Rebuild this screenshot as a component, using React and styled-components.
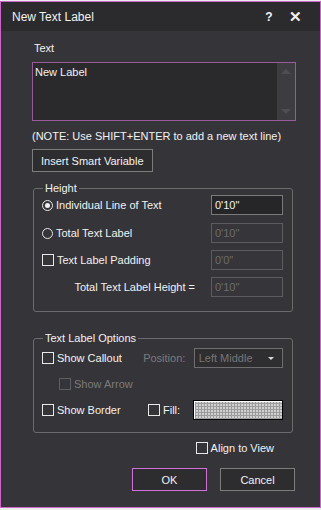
import styled, { createGlobalStyle } from 'styled-components'

const Global = createGlobalStyle`
  html, body {
    margin: 0;
    padding: 0;
    background: #ececec;
  }
  body {
    font-family: "Liberation Sans", Arial, sans-serif;
    font-size: 11px;
  }
`

const Window = styled.div`
  margin-top: 1px;
  width: 321px;
  height: 507px;
  box-sizing: border-box;
  border: 1px solid #cc66cc;
  background: #353439;
  color: #f2f2f2;
  display: flex;
  flex-direction: column;
`

const TitleBar = styled.div`
  height: 29px;
  flex: none;
  background: #2b2b2e;
  display: flex;
  align-items: center;
  padding: 0 12px 0 11px;
  font-size: 12px;
`

const Title = styled.span`
  flex: 1;
`

const TitleButton = styled.span`
  width: 26px;
  text-align: center;
  font-weight: bold;
  font-size: ${p => p.$size || 12}px;
`

const Body = styled.div`
  padding: 9px 24px 0 31px;
  display: flex;
  flex-direction: column;
`

const Label = styled.div`
  padding-left: 2px;
  line-height: 16px;
`

const TextArea = styled.div`
  margin-top: 6px;
  height: 59px;
  box-sizing: border-box;
  border: 1px solid #9a5a9a;
  background: #2a2a2c;
  display: flex;
`

const TextAreaText = styled.div`
  flex: 1;
  padding: 2px 2px;
  line-height: 14px;
`

const ScrollBar = styled.div`
  width: 18px;
  background: #3d3c41;
  display: flex;
  flex-direction: column;
  justify-content: space-between;
  align-items: center;
  padding: 6px 0;
`

const Arrow = styled.div`
  width: 0;
  height: 0;
  border-left: 5px solid transparent;
  border-right: 5px solid transparent;
  ${p => p.$down ? 'border-top: 5px solid #4f4e53;' : 'border-bottom: 5px solid #4f4e53;'}
`

const Note = styled.div`
  margin-top: 8px;
  line-height: 14px;
`

const Button = styled.button`
  font-family: inherit;
  font-size: 11px;
  color: #f2f2f2;
  background: #2d2d30;
  border: 1px solid ${p => p.$primary ? '#d070d8' : '#7c7c7c'};
  height: 23px;
  padding: 0 ${p => p.$pad || 8}px;
  width: ${p => p.$width ? p.$width + 'px' : 'auto'};
  align-self: flex-start;
`

const Group = styled.fieldset`
  margin: ${p => p.$top}px 3px 0 1px;
  border: 1px solid #6b6b6b;
  border-radius: 3px;
  padding: 0 8px ${p => p.$bottom}px 8px;
  min-width: 0;
`

const Legend = styled.legend`
  padding: 0 2px;
  margin-left: 1px;
  line-height: 14px;
`

const Row = styled.div`
  display: flex;
  align-items: center;
  height: 20px;
  margin-top: ${p => p.$gap}px;
`

const Option = styled.label`
  display: flex;
  align-items: center;
  gap: 3px;
  width: ${p => p.$width ? p.$width + 'px' : 'auto'};
  color: ${p => p.$disabled ? '#7b7b7b' : '#f2f2f2'};
  padding-left: ${p => p.$indent || 0}px;
`

const Radio = styled.span`
  width: 11px;
  height: 11px;
  box-sizing: border-box;
  border: 1px solid #e8e8e8;
  border-radius: 50%;
  display: flex;
  align-items: center;
  justify-content: center;
  &::after {
    content: '';
    width: 5px;
    height: 5px;
    border-radius: 50%;
    background: ${p => p.$checked ? '#f2f2f2' : 'transparent'};
  }
`

const Check = styled.span`
  width: 12px;
  height: 12px;
  box-sizing: border-box;
  border: 1px solid ${p => p.$disabled ? '#5e5e5e' : '#e8e8e8'};
  flex: none;
`

const Spacer = styled.div`
  flex: 1;
`

const RightLabel = styled.span`
  padding-right: 16px;
`

const Field = styled.div`
  width: 72px;
  height: 20px;
  box-sizing: border-box;
  border: 1px solid ${p => p.$disabled ? '#5c5c5c' : '#7a7a7a'};
  background: ${p => p.$disabled ? '#36353a' : '#262628'};
  color: ${p => p.$disabled ? '#6c6c6c' : '#f2f2f2'};
  padding: 0 3px;
  line-height: 18px;
  margin-right: 1px;
`

const Muted = styled.span`
  color: #7b7b7b;
  width: 51px;
`

const Select = styled.div`
  width: 90px;
  height: 20px;
  box-sizing: border-box;
  border: 1px solid #6e6e6e;
  background: #2e2e31;
  color: #767676;
  display: flex;
  align-items: center;
  padding: 0 4px;
  margin-right: 1px;
`

const Caret = styled.span`
  margin-left: auto;
  width: 0;
  height: 0;
  border-left: 3px solid transparent;
  border-right: 3px solid transparent;
  border-top: 3px solid #d8d8d8;
  margin-right: 4px;
`

const Swatch = styled.div`
  width: 90px;
  height: 20px;
  box-sizing: border-box;
  border: 1px solid #000;
  margin-right: 1px;
  padding: 1px 0 0 1px;
  background: #fff;
`

const SwatchFill = styled.div`
  height: 100%;
  background-color: #d0d0d0;
  background-image:
    repeating-linear-gradient(90deg, #9c9c9c 0 1px, transparent 1px 3px),
    repeating-linear-gradient(0deg, #9c9c9c 0 1px, transparent 1px 3px);
`

const AlignRow = styled.div`
  display: flex;
  justify-content: flex-end;
  padding-right: 22px;
  margin-top: 8px;
  height: 14px;
  align-items: center;
`

const Footer = styled.div`
  display: flex;
  justify-content: flex-end;
  gap: 13px;
  margin-top: 13px;
  margin-right: 1px;
`

export default function App() {
  return (
    <>
      <Global />
      <Window>
        <TitleBar>
          <Title>New Text Label</Title>
          <TitleButton>?</TitleButton>
          <TitleButton $size={15}>✕</TitleButton>
        </TitleBar>
        <Body>
          <Label>Text</Label>
          <TextArea>
            <TextAreaText>New Label</TextAreaText>
            <ScrollBar>
              <Arrow />
              <Arrow $down />
            </ScrollBar>
          </TextArea>
          <Note>(NOTE: Use SHIFT+ENTER to add a new text line)</Note>
          <Button $pad={8} style={{ marginTop: 6 }}>Insert Smart Variable</Button>

          <Group $top={9} $bottom={14}>
            <Legend>Height</Legend>
            <Row $gap={0}>
              <Option><Radio $checked />Individual Line of Text</Option>
              <Spacer />
              <Field>0'10"</Field>
            </Row>
            <Row $gap={8}>
              <Option><Radio />Total Text Label</Option>
              <Spacer />
              <Field $disabled>0'10"</Field>
            </Row>
            <Row $gap={7}>
              <Option><Check />Text Label Padding</Option>
              <Spacer />
              <Field $disabled>0'0"</Field>
            </Row>
            <Row $gap={7}>
              <Spacer />
              <RightLabel>Total Text Label Height =</RightLabel>
              <Field $disabled>0'10"</Field>
            </Row>
          </Group>

          <Group $top={19} $bottom={12}>
            <Legend>Text Label Options</Legend>
            <Row $gap={3}>
              <Option $width={102}><Check />Show Callout</Option>
              <Spacer />
              <Muted>Position:</Muted>
              <Select>Left Middle<Caret /></Select>
            </Row>
            <Row $gap={6}>
              <Option $disabled $indent={17}><Check $disabled />Show Arrow</Option>
            </Row>
            <Row $gap={6}>
              <Option $width={106}><Check />Show Border</Option>
              <Option><Check />Fill:</Option>
              <Spacer />
              <Swatch><SwatchFill /></Swatch>
            </Row>
          </Group>

          <AlignRow>
            <Option><Check />Align to View</Option>
          </AlignRow>

          <Footer>
            <Button $primary $width={75}>OK</Button>
            <Button $width={75}>Cancel</Button>
          </Footer>
        </Body>
      </Window>
    </>
  )
}
